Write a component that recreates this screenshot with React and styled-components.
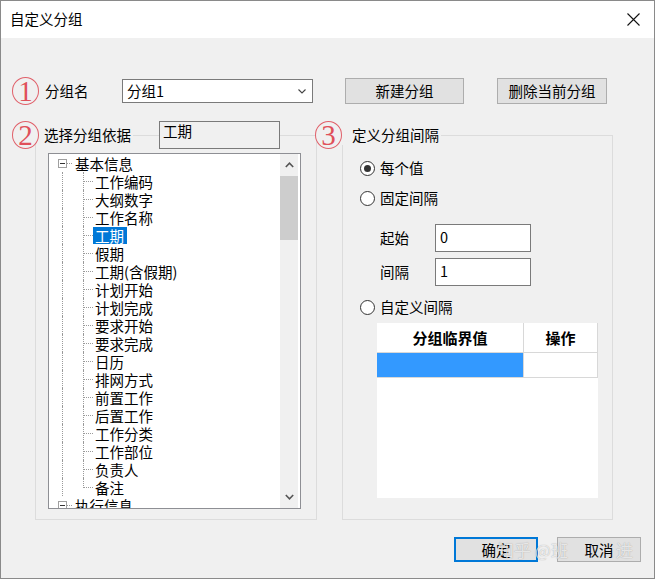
import React from 'react';
import styled, { createGlobalStyle } from 'styled-components';

const GlobalStyle = createGlobalStyle`
  html, body { margin: 0; padding: 0; background: #f0f0f0; }
  body {
    font-family: "Noto Sans CJK SC", "Noto Sans", sans-serif;
    font-size: 14.5px;
    color: #000;
  }
  * { box-sizing: border-box; }
`;

const Window = styled.div`
  position: relative;
  width: 655px;
  height: 579px;
  border: 1px solid #8a8a8a;
  background: #f0f0f0;
  display: flex;
  flex-direction: column;
  overflow: hidden;
`;

const TitleBar = styled.div`
  height: 37px;
  flex: none;
  background: #fff;
  display: flex;
  align-items: center;
  justify-content: space-between;
  padding: 0 14px 0 9px;
`;

const Title = styled.span`
  font-size: 14.5px;
  line-height: 20px;
  margin-top: -2px;
`;

const Body = styled.div`
  flex: 1;
  padding: 39px 13px 0 11px;
  display: flex;
  flex-direction: column;
`;

const Row = styled.div`
  display: flex;
  align-items: center;
  height: 28px;
`;

const Badge = styled.span`
  flex: none;
  width: 27px;
  height: 28px;
  border-radius: 50%;
  border: 1.5px solid #e0606a;
  background: #f0f0f0;
  color: #e0505a;
  font-family: "Liberation Serif", "Times New Roman", serif;
  font-size: 29px;
  line-height: 25px;
  display: flex;
  align-items: center;
  justify-content: center;
  position: relative;
`;

const FieldLabel = styled.span`
  width: ${p => p.$w}px;
  margin-left: ${p => p.$ml || 0}px;
  line-height: 20px;
  flex: none;
`;

const Combo = styled.div`
  width: 191px;
  height: 24px;
  background: #fff;
  border: 1px solid #7a7a7a;
  display: flex;
  align-items: center;
  justify-content: space-between;
  padding: 0 6px 0 4px;
  line-height: 20px;
`;

const Button = styled.div`
  flex: none;
  width: ${p => p.$w}px;
  height: ${p => p.$h || 26}px;
  margin-left: ${p => p.$ml || 0}px;
  background: #e1e1e1;
  border: ${p => (p.$primary ? '2px solid #0078d7' : '1px solid #adadad')};
  display: flex;
  align-items: center;
  justify-content: center;
  line-height: 20px;
`;

const Columns = styled.div`
  display: flex;
  margin-top: 20px;
  padding-left: 23px;
  gap: 25px;
`;

const GroupBox = styled.div`
  width: ${p => p.$w}px;
  margin-top: 10px;
  border: 1px solid #dcdcdc;
  display: flex;
  flex-direction: column;
`;

const GroupHeader = styled.div`
  display: flex;
  align-items: center;
  height: 28px;
  margin: -15px 0 0 ${p => p.$offset}px;
`;

const Caption = styled.span`
  background: #f0f0f0;
  padding: 0 2px 0 ${p => p.$pad}px;
  line-height: 20px;
`;

const ReadonlyBox = styled.div`
  margin-left: 26px;
  width: 121px;
  height: 28px;
  border: 1px solid #7a7a7a;
  background: #f0f0f0;
  padding: 0 3px;
  line-height: 18px;
`;

/* ---------- tree ---------- */
const Tree = styled.div`
  margin: 4px 15px 10px 12px;
  height: 356px;
  border: 1px solid #8e8f94;
  background: #fff;
  display: flex;
`;

const TreeList = styled.div`
  flex: 1;
  overflow: hidden;
  display: flex;
  flex-direction: column;
`;

const TreeRow = styled.div`
  flex: none;
  height: 18px;
  display: flex;
  align-items: center;
`;

const Expander = styled.span`
  flex: none;
  width: 9px;
  height: 9px;
  margin-left: 9px;
  border: 1px solid #a0a0a0;
  background: #fff;
  display: flex;
  align-items: center;
  justify-content: center;
  &::before {
    content: '';
    width: 5px;
    height: 1px;
    background: #333;
  }
`;

const dots = 'repeating-linear-gradient(to right, #9a9a9a 0 1px, transparent 1px 2px)';

const Stub = styled.span`
  flex: none;
  width: 6px;
  height: 1px;
  background: ${dots};
`;

const Guide = styled.span`
  flex: none;
  align-self: stretch;
  width: 21px;
  margin-left: 13px;
  border-left: 1px dotted #9a9a9a;
`;

const Elbow = styled.span`
  flex: none;
  align-self: ${p => (p.$last ? 'flex-start' : 'stretch')};
  height: ${p => (p.$last ? '10px' : 'auto')};
  width: 10px;
  border-left: 1px dotted #9a9a9a;
  background: ${dots} no-repeat left ${p => (p.$last ? 'bottom' : 'center')} / 9px 1px;
`;

const NodeText = styled.span`
  padding: 0 3px 0 2px;
  line-height: 17px;
  height: 17px;
  white-space: nowrap;
  background: ${p => (p.$selected ? '#0078d7' : 'transparent')};
  color: ${p => (p.$selected ? '#fff' : '#000')};
`;

const ScrollBar = styled.div`
  flex: none;
  width: 18px;
  margin-right: 2px;
  background: #f0f0f0;
  display: flex;
  flex-direction: column;
`;

const ScrollButton = styled.div`
  height: 22px;
  display: flex;
  align-items: center;
  justify-content: center;
`;

const Thumb = styled.div`
  height: 64px;
  background: #cdcdcd;
`;

const Track = styled.div`
  flex: 1;
`;

/* ---------- right panel ---------- */
const RightContent = styled.div`
  padding-left: 17px;
  display: flex;
  flex-direction: column;
`;

const RadioRow = styled.div`
  display: flex;
  align-items: center;
  height: 20px;
  margin-top: ${p => p.$mt}px;
`;

const RadioCircle = styled.span`
  flex: none;
  width: 15px;
  height: 15px;
  border-radius: 50%;
  border: 1px solid #333;
  background: #fff;
  display: flex;
  align-items: center;
  justify-content: center;
  &::after {
    content: '';
    display: ${p => (p.$checked ? 'block' : 'none')};
    width: 7px;
    height: 7px;
    border-radius: 50%;
    background: #333;
  }
`;

const RadioText = styled.span`
  margin-left: 5px;
  line-height: 20px;
`;

const FieldRow = styled.div`
  display: flex;
  align-items: center;
  padding-left: 20px;
  margin-top: ${p => p.$mt}px;
`;

const TextField = styled.div`
  width: 96px;
  height: 28px;
  border: 1px solid #7a7a7a;
  background: #fff;
  padding: 2px 4px 0;
  line-height: 20px;
`;

const Table = styled.div`
  margin: 6px 0 0 17px;
  width: 221px;
  height: 175px;
  background: #fff;
  display: grid;
  grid-template-columns: 147px 74px;
  grid-template-rows: 30px 25px;
  align-content: start;
`;

const HeadCell = styled.div`
  border-right: 1px solid #d8d8d8;
  border-bottom: 1px solid #d8d8d8;
  display: flex;
  align-items: center;
  justify-content: center;
  font-weight: 700;
  font-size: 15px;
`;

const DataCell = styled.div`
  border-right: 1px solid #d8d8d8;
  border-bottom: 1px solid #d8d8d8;
  background: ${p => (p.$active ? '#3399ff' : '#fff')};
`;

const ButtonBar = styled.div`
  display: flex;
  justify-content: flex-end;
  gap: 19px;
  margin-top: 17px;
`;

const Watermark = styled.div`
  position: absolute;
  left: 496px;
  top: 538px;
  display: flex;
  gap: 48px;
  font-size: 17px;
  line-height: 22px;
  color: rgba(255, 255, 255, 0.75);
  text-shadow: 0 0 1px rgba(0, 0, 0, 0.35);
  pointer-events: none;
`;

const CloseIcon = () => (
  <svg width="13" height="13" viewBox="0 0 13 13">
    <path d="M0.5 0.5 L12.5 12.5 M12.5 0.5 L0.5 12.5" stroke="#111" strokeWidth="1.1" fill="none" />
  </svg>
);

const ChevronDown = ({ w = 8, color = '#444' }) => (
  <svg width={w} height={w / 2 + 1} viewBox="0 0 8 5">
    <path d="M0.5 0.5 L4 4 L7.5 0.5" stroke={color} strokeWidth="1.1" fill="none" />
  </svg>
);

const ChevronUp = () => (
  <svg width="9" height="6" viewBox="0 0 9 6">
    <path d="M0.8 5 L4.5 1.2 L8.2 5" stroke="#555" strokeWidth="1.6" fill="none" />
  </svg>
);

const ChevronDownBold = () => (
  <svg width="9" height="6" viewBox="0 0 9 6">
    <path d="M0.8 1 L4.5 4.8 L8.2 1" stroke="#555" strokeWidth="1.6" fill="none" />
  </svg>
);

const children = [
  '工作编码', '大纲数字', '工作名称', '工期', '假期', '工期(含假期)', '计划开始',
  '计划完成', '要求开始', '要求完成', '日历', '排网方式', '前置工作', '后置工作',
  '工作分类', '工作部位', '负责人', '备注',
];

export default function App() {
  return (
    <>
      <GlobalStyle />
      <Window>
        <TitleBar>
          <Title>自定义分组</Title>
          <CloseIcon />
        </TitleBar>
        <Body>
          <Row>
            <Badge>1</Badge>
            <FieldLabel $w={77} $ml={6}>分组名</FieldLabel>
            <Combo>
              <span>分组1</span>
              <ChevronDown />
            </Combo>
            <Button $w={119} $ml={32}>新建分组</Button>
            <Button $w={110} $ml={33}>删除当前分组</Button>
          </Row>

          <Columns>
            <GroupBox $w={282}>
              <GroupHeader $offset={-24}>
                <Badge>2</Badge>
                <Caption $pad={5}>选择分组依据</Caption>
                <ReadonlyBox>工期</ReadonlyBox>
              </GroupHeader>
              <Tree>
                <TreeList>
                  <TreeRow>
                    <Expander />
                    <Stub />
                    <NodeText>基本信息</NodeText>
                  </TreeRow>
                  {children.map((c, i) => (
                    <TreeRow key={c}>
                      <Guide />
                      <Elbow $last={i === children.length - 1} />
                      <NodeText $selected={c === '工期'}>{c}</NodeText>
                    </TreeRow>
                  ))}
                  <TreeRow>
                    <Expander />
                    <Stub />
                    <NodeText>执行信息</NodeText>
                  </TreeRow>
                </TreeList>
                <ScrollBar>
                  <ScrollButton><ChevronUp /></ScrollButton>
                  <Thumb />
                  <Track />
                  <ScrollButton><ChevronDownBold /></ScrollButton>
                </ScrollBar>
              </Tree>
            </GroupBox>

            <GroupBox $w={271}>
              <GroupHeader $offset={-28}>
                <Badge>3</Badge>
                <Caption $pad={10}>定义分组间隔</Caption>
              </GroupHeader>
              <RightContent>
                <RadioRow $mt={9}>
                  <RadioCircle $checked />
                  <RadioText>每个值</RadioText>
                </RadioRow>
                <RadioRow $mt={10}>
                  <RadioCircle />
                  <RadioText>固定间隔</RadioText>
                </RadioRow>
                <FieldRow $mt={16}>
                  <FieldLabel $w={55}>起始</FieldLabel>
                  <TextField>0</TextField>
                </FieldRow>
                <FieldRow $mt={6}>
                  <FieldLabel $w={55}>间隔</FieldLabel>
                  <TextField>1</TextField>
                </FieldRow>
                <RadioRow $mt={11}>
                  <RadioCircle />
                  <RadioText>自定义间隔</RadioText>
                </RadioRow>
                <Table>
                  <HeadCell>分组临界值</HeadCell>
                  <HeadCell>操作</HeadCell>
                  <DataCell $active />
                  <DataCell />
                </Table>
              </RightContent>
            </GroupBox>
          </Columns>

          <ButtonBar>
            <Button $w={84} $h={25} $primary>确定</Button>
            <Button $w={84} $h={25}>取消</Button>
          </ButtonBar>
        </Body>
        <Watermark>
          <span>知乎 @班</span>
          <span>进</span>
        </Watermark>
      </Window>
    </>
  );
}
